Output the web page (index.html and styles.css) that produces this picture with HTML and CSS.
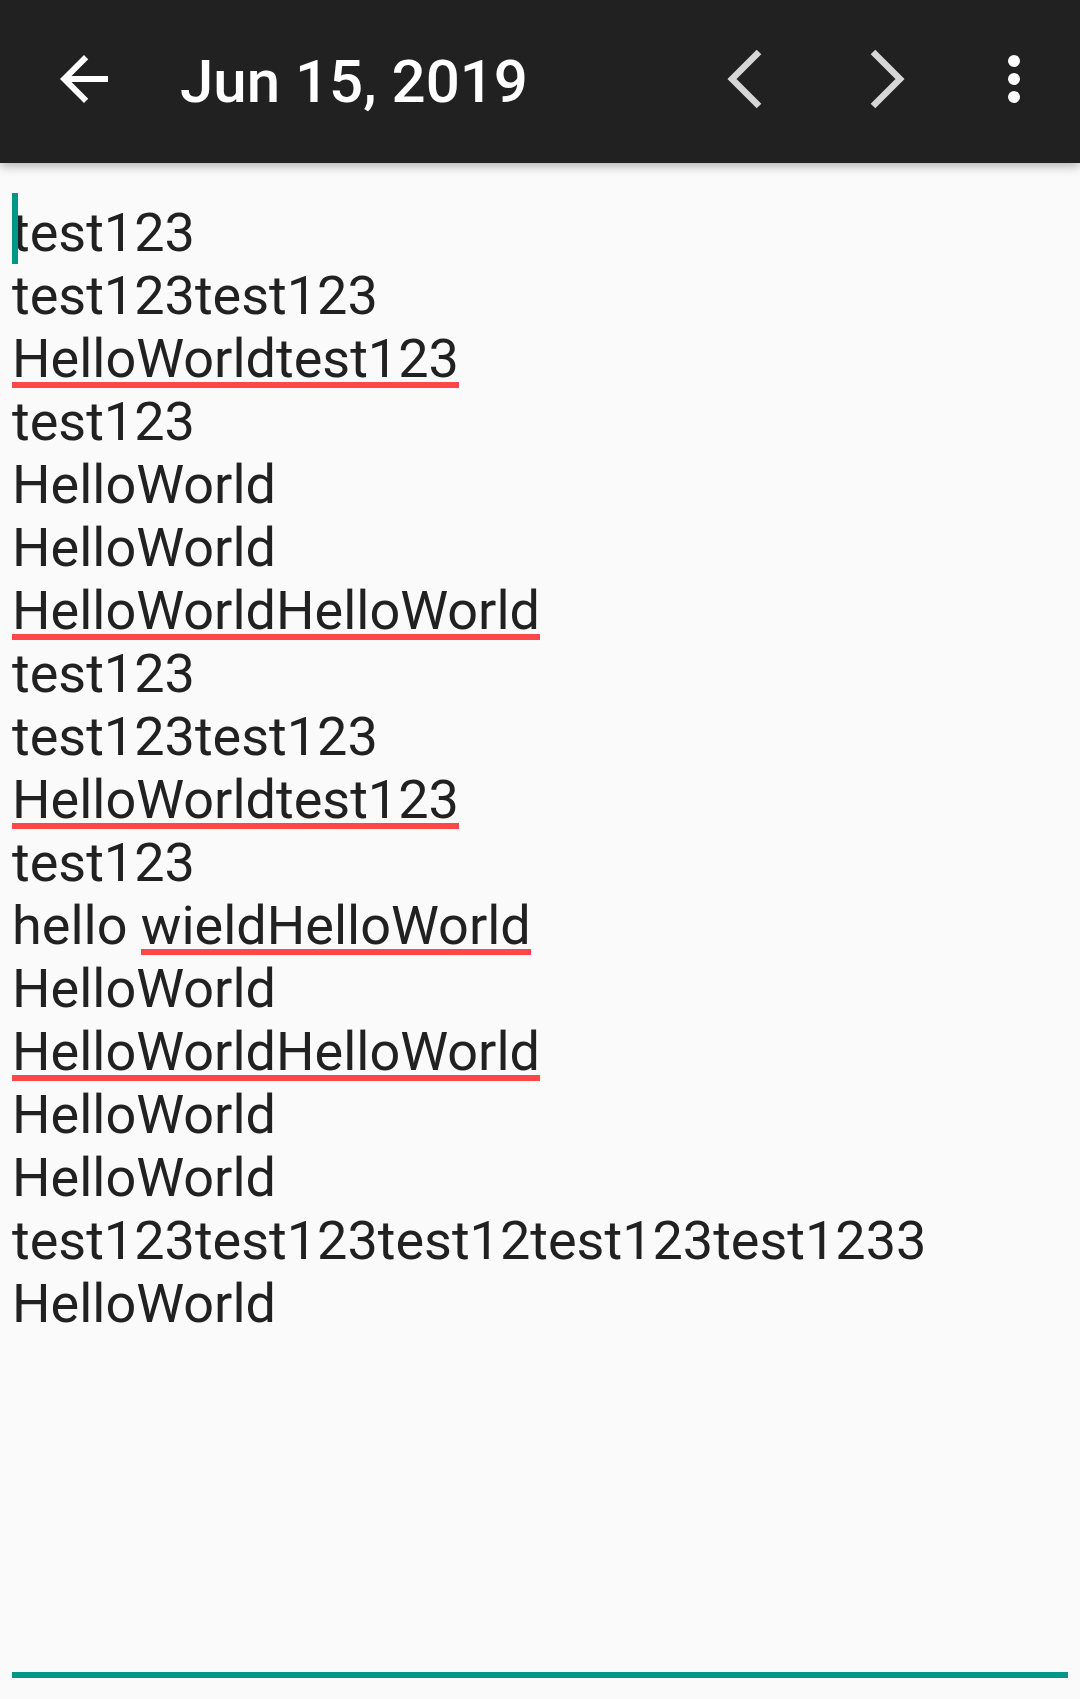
FILE: index.html
```html
<!DOCTYPE html>
<html lang="en">
<head>
<meta charset="utf-8">
<title>Jun 15, 2019</title>
<link rel="stylesheet" href="styles.css">
</head>
<body>
<header class="toolbar">
  <svg class="icon back" viewBox="0 0 24 24" width="72" height="72" aria-label="Back">
    <path d="M20 11H7.83l5.59-5.59L12 4l-8 8 8 8 1.41-1.41L7.83 13H20v-2z" fill="#ffffff"/>
  </svg>
  <h1 class="title">Jun 15, 2019</h1>
  <svg class="icon prev" viewBox="0 0 72 72" width="72" height="72" aria-label="Previous">
    <polyline points="51,9 24,36 51,63" fill="none" stroke="#d6d6d6" stroke-width="6.5" stroke-linejoin="miter" stroke-linecap="butt"/>
  </svg>
  <svg class="icon next" viewBox="0 0 72 72" width="72" height="72" aria-label="Next">
    <polyline points="21,9 48,36 21,63" fill="none" stroke="#d6d6d6" stroke-width="6.5" stroke-linejoin="miter" stroke-linecap="butt"/>
  </svg>
  <svg class="icon more" viewBox="0 0 72 72" width="72" height="72" aria-label="More options">
    <circle cx="36" cy="18" r="6" fill="#ffffff"/>
    <circle cx="36" cy="36" r="6" fill="#ffffff"/>
    <circle cx="36" cy="54" r="6" fill="#ffffff"/>
  </svg>
</header>
<main class="editor">
  <div class="text">
    <span class="cursor"></span>
    <div class="line">test123</div>
    <div class="line">test123test123</div>
    <div class="line"><span class="spell">HelloWorldtest123</span></div>
    <div class="line">test123</div>
    <div class="line">HelloWorld</div>
    <div class="line">HelloWorld</div>
    <div class="line"><span class="spell">HelloWorldHelloWorld</span></div>
    <div class="line">test123</div>
    <div class="line">test123test123</div>
    <div class="line"><span class="spell">HelloWorldtest123</span></div>
    <div class="line">test123</div>
    <div class="line">hello <span class="spell">wieldHelloWorld</span></div>
    <div class="line">HelloWorld</div>
    <div class="line"><span class="spell">HelloWorldHelloWorld</span></div>
    <div class="line">HelloWorld</div>
    <div class="line">HelloWorld</div>
    <div class="line">test123test123test12test123test1233</div>
    <div class="line">HelloWorld</div>
  </div>
  <div class="field-line"></div>
</main>
</body>
</html>
```

FILE: styles.css
```css
html, body {
  margin: 0;
  padding: 0;
}

body {
  width: 1080px;
  height: 1699px;
  background: #fafafa;
  font-family: Roboto, "Noto Sans", sans-serif;
  display: flex;
  flex-direction: column;
  overflow: hidden;
}

.toolbar {
  position: relative;
  z-index: 1;
  height: 163px;
  box-sizing: border-box;
  padding: 0 30px 5px 48px;
  background: #212121;
  display: flex;
  align-items: center;
  box-shadow: 0 3px 10px rgba(0, 0, 0, 0.3);
  flex: none;
}

.icon {
  display: block;
  flex: none;
}

.title {
  margin: 4px 0 0 60px;
  font-size: 60px;
  font-weight: 500;
  color: #ffffff;
  line-height: normal;
  flex: 1;
  white-space: nowrap;
}

.prev {
  margin-left: auto;
}

.next {
  margin-left: 72px;
}

.more {
  margin-left: 54px;
}

.editor {
  flex: 1;
  display: flex;
  flex-direction: column;
  padding: 38px 12px 21px 12px;
}

.text {
  position: relative;
  font-size: 54px;
  line-height: 63px;
  color: #212121;
}

.line {
  white-space: nowrap;
}

.cursor {
  position: absolute;
  left: 0;
  top: -8px;
  width: 6px;
  height: 71px;
  background: #009688;
}

.spell {
  background-image: linear-gradient(#ff4747, #ff4747);
  background-repeat: no-repeat;
  background-size: 100% 6px;
  background-position: 0 calc(100% - 2px);
}

.field-line {
  margin-top: auto;
  height: 6px;
  background: #009688;
}
```
